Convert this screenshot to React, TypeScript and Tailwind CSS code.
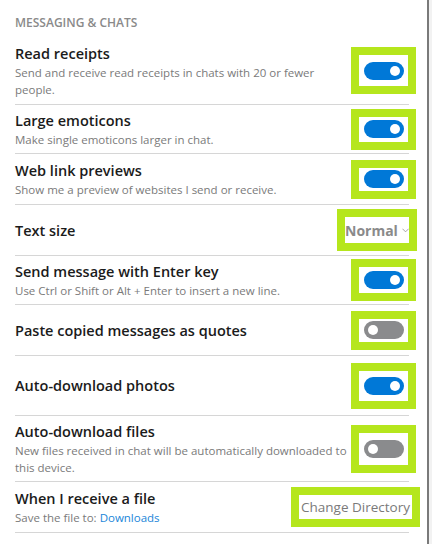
import React from "react";

interface RowProps {
  title: string;
  desc?: React.ReactNode;
  h: string;
  children: React.ReactNode;
}

const Toggle = ({ on }: { on: boolean }) => (
  <span
    className={`flex h-[18px] w-[40px] items-center rounded-full px-[4px] ${
      on ? "justify-end bg-[#0078d7]" : "justify-start bg-[#8a8b8d]"
    }`}
  >
    <span className="h-[10px] w-[10px] rounded-full bg-white" />
  </span>
);

const Mark = ({ h, children }: { h: string; children: React.ReactNode }) => (
  <div className={`-mr-[7px] flex w-[65px] shrink-0 items-center justify-center border-[8px] border-[#b5e61d] bg-white ${h}`}>
    {children}
  </div>
);

const Row: React.FC<RowProps> = ({ title, desc, h, children }) => (
  <div className={`flex items-center justify-between border-b border-[#d6d6d6] ${h}`}>
    <div className="flex-1 pr-[4px]">
      <p className="text-[14.5px] font-semibold leading-[21px] text-[#1b1b1b]">{title}</p>
      {desc && <p className="text-[11.5px] leading-[17px] text-[#7a7a7a]">{desc}</p>}
    </div>
    {children}
  </div>
);

export default function App() {
  return (
    <div className="flex h-[544px] w-[432px] bg-[#f2f2f2] font-['Segoe_UI','Open_Sans',sans-serif]">
      <div className="h-full w-[429px] border-r-2 border-[#7a7a7a] bg-white pl-[15px]">
        <div className="w-[394px]">
          <div className="h-[37px] pt-[15px] text-[12px] font-semibold leading-[16px] text-[#8a8a8a]">
            MESSAGING &amp; CHATS
          </div>

          <Row title="Read receipts" desc="Send and receive read receipts in chats with 20 or fewer people." h="h-[68px]">
            <Mark h="h-[47px]"><Toggle on /></Mark>
          </Row>

          <Row title="Large emoticons" desc="Make single emoticons larger in chat." h="h-[49px]">
            <Mark h="h-[41px]"><Toggle on /></Mark>
          </Row>

          <Row title="Web link previews" desc="Show me a preview of websites I send or receive." h="h-[51px]">
            <Mark h="h-[39px]"><Toggle on /></Mark>
          </Row>

          <Row title="Text size" h="h-[51px]">
            <div className="-mr-[8px] flex h-[42px] w-[80px] shrink-0 items-center justify-center border-[8px] border-[#b5e61d] bg-white">
              <span className="text-[14px] font-bold text-[#8a8a8a]">Normal</span>
              <svg width="8" height="5" viewBox="0 0 8 5" className="ml-[4px] mt-[1px]">
                <path d="M0.5 0.5 L4 4 L7.5 0.5" fill="none" stroke="#9a9a9a" strokeWidth="1" />
              </svg>
            </div>
          </Row>

          <Row title="Send message with Enter key" desc="Use Ctrl or Shift or Alt + Enter to insert a new line." h="h-[49px]">
            <Mark h="h-[42px]"><Toggle on /></Mark>
          </Row>

          <Row title="Paste copied messages as quotes" h="h-[51px]">
            <Mark h="h-[39px]"><Toggle on={false} /></Mark>
          </Row>

          <Row title="Auto-download photos" h="h-[60px]">
            <Mark h="h-[46px]"><Toggle on /></Mark>
          </Row>

          <Row
            title="Auto-download files"
            desc="New files received in chat will be automatically downloaded to this device."
            h="h-[66px]"
          >
            <Mark h="h-[48px]"><Toggle on={false} /></Mark>
          </Row>

          <Row
            title="When I receive a file"
            desc={
              <>
                Save the file to: <span className="text-[#1a86d9]">Downloads</span>
              </>
            }
            h="h-[51px]"
          >
            <div className="-mr-[11px] flex h-[40px] w-[129px] shrink-0 items-center justify-center border-[8px] border-[#b5e61d] bg-white">
              <span className="whitespace-nowrap text-[13.5px] text-[#7a7a7a]">Change Directory</span>
            </div>
          </Row>
        </div>
      </div>
    </div>
  );
}
